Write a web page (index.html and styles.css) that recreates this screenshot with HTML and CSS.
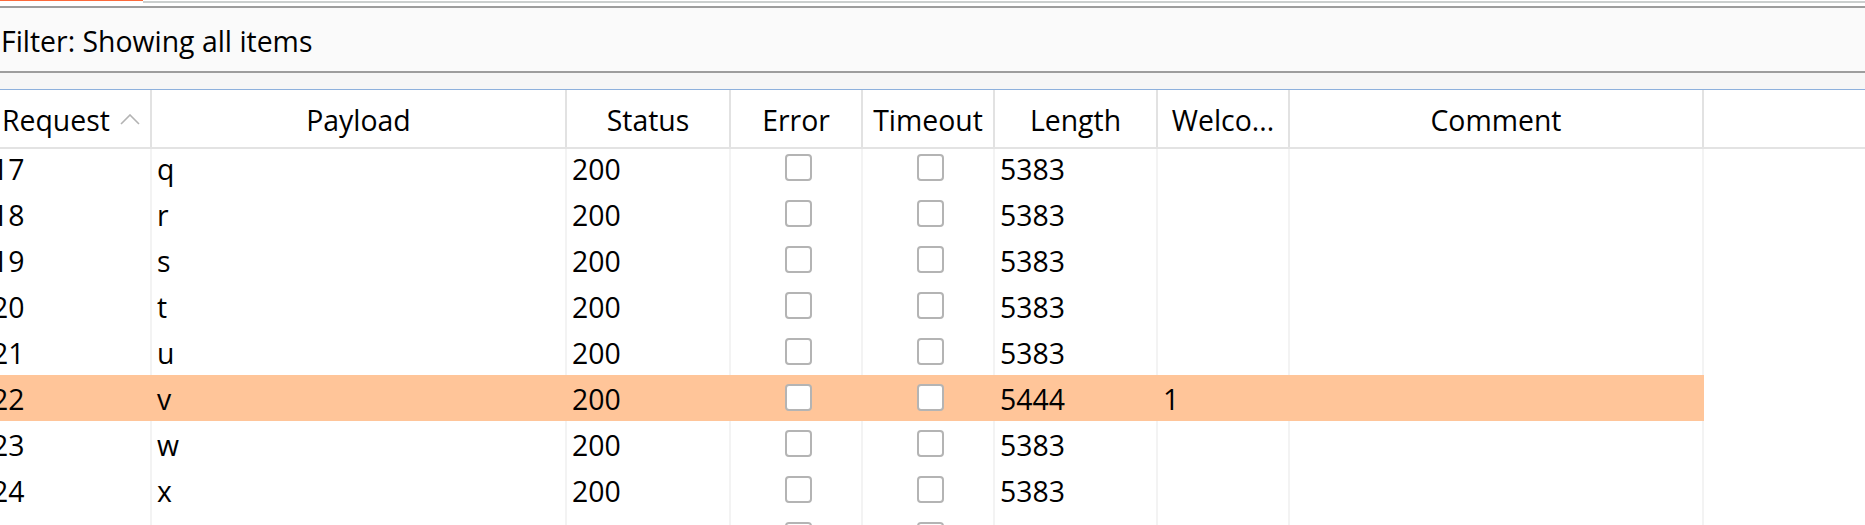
FILE: index.html
```html
<!DOCTYPE html>
<html lang="en">
<head>
<meta charset="utf-8">
<title>Intruder results</title>
<link rel="stylesheet" href="styles.css">
</head>
<body>
<div class="tabstrip">
  <div class="tab-active"></div>
  <div class="tab-rest"></div>
</div>
<div class="filter">Filter: Showing all items</div>
<div class="gap"></div>
<div class="table-view">
  <div class="table-inner">
    <div class="thead">
      <div class="th th-sort"><span>Request</span><svg class="sort" width="20" height="11" viewBox="0 0 20 11"><polyline points="1,10 10,1 19,10" fill="none" stroke="#b3b3b3" stroke-width="1.6"/></svg></div>
      <div class="th">Payload</div>
      <div class="th">Status</div>
      <div class="th">Error</div>
      <div class="th">Timeout</div>
      <div class="th">Length</div>
      <div class="th">Welco...</div>
      <div class="th">Comment</div>
      <div class="th filler"></div>
    </div>
    <div class="tbody">
      <div class="rows">
        <div class="row"><div class="td num">17</div><div class="td">q</div><div class="td">200</div><div class="td cb"><span class="box"></span></div><div class="td cb"><span class="box"></span></div><div class="td">5383</div><div class="td"></div><div class="td"></div><div class="td filler"></div></div>
        <div class="row"><div class="td num">18</div><div class="td">r</div><div class="td">200</div><div class="td cb"><span class="box"></span></div><div class="td cb"><span class="box"></span></div><div class="td">5383</div><div class="td"></div><div class="td"></div><div class="td filler"></div></div>
        <div class="row"><div class="td num">19</div><div class="td">s</div><div class="td">200</div><div class="td cb"><span class="box"></span></div><div class="td cb"><span class="box"></span></div><div class="td">5383</div><div class="td"></div><div class="td"></div><div class="td filler"></div></div>
        <div class="row"><div class="td num">20</div><div class="td">t</div><div class="td">200</div><div class="td cb"><span class="box"></span></div><div class="td cb"><span class="box"></span></div><div class="td">5383</div><div class="td"></div><div class="td"></div><div class="td filler"></div></div>
        <div class="row"><div class="td num">21</div><div class="td">u</div><div class="td">200</div><div class="td cb"><span class="box"></span></div><div class="td cb"><span class="box"></span></div><div class="td">5383</div><div class="td"></div><div class="td"></div><div class="td filler"></div></div>
        <div class="row hl"><div class="td num">22</div><div class="td">v</div><div class="td">200</div><div class="td cb"><span class="box"></span></div><div class="td cb"><span class="box"></span></div><div class="td">5444</div><div class="td">1</div><div class="td"></div><div class="td filler"></div></div>
        <div class="row"><div class="td num">23</div><div class="td">w</div><div class="td">200</div><div class="td cb"><span class="box"></span></div><div class="td cb"><span class="box"></span></div><div class="td">5383</div><div class="td"></div><div class="td"></div><div class="td filler"></div></div>
        <div class="row"><div class="td num">24</div><div class="td">x</div><div class="td">200</div><div class="td cb"><span class="box"></span></div><div class="td cb"><span class="box"></span></div><div class="td">5383</div><div class="td"></div><div class="td"></div><div class="td filler"></div></div>
        <div class="row"><div class="td num">25</div><div class="td">y</div><div class="td">200</div><div class="td cb"><span class="box"></span></div><div class="td cb"><span class="box"></span></div><div class="td">5383</div><div class="td"></div><div class="td"></div><div class="td filler"></div></div>
      </div>
    </div>
  </div>
</div>
</body>
</html>
```
FILE: styles.css
```css
html {
  overflow: hidden;
}
body {
  margin: 0;
  background: #ffffff;
  font-family: "Open Sans", "Noto Sans", sans-serif;
  font-size: 28.4px;
  color: #000000;
  height: 525px;
  overflow: hidden;
}
.tabstrip {
  display: flex;
  height: 6px;
  background: #ffffff;
}
.tab-active {
  width: 143px;
  height: 1px;
  background: #fb6a3b;
}
.tab-rest {
  flex: 1;
  margin-top: 1px;
  height: 2px;
  background: #cbcfce;
}
.filter {
  border-top: 2px solid #9d9d9d;
  border-bottom: 2px solid #9d9d9d;
  background: #fafafa;
  padding: 14px 0 0 1px;
  box-sizing: border-box;
  height: 67px;
  line-height: normal;
  white-space: nowrap;
}
.gap {
  height: 16px;
  background: #f6f6f6;
  border-bottom: 1px solid #8db0dc;
}
.table-view {
  overflow: hidden;
}
.table-inner {
  margin-left: -18px;
}
.thead,
.row {
  display: grid;
  grid-template-columns: 170px 415px 164px 132px 132px 163px 132px 414px 1fr;
}
.thead {
  border-bottom: 2px solid #e3e3e3;
  background: #ffffff;
}
.th {
  height: 57px;
  box-sizing: border-box;
  padding-top: 3px;
  line-height: 54px;
  text-align: center;
  border-right: 2px solid #e2e2e2;
  white-space: nowrap;
  overflow: hidden;
}
.th-sort {
  display: flex;
  align-items: flex-start;
  text-align: left;
  padding-left: 20px;
}
.sort {
  margin-left: 10px;
  margin-top: 21px;
}
.th.filler,
.td.filler {
  border-right: none;
}
.tbody {
  overflow: hidden;
  height: 376px;
}
.rows {
  margin-top: -4px;
}
.td {
  height: 46px;
  box-sizing: border-box;
  padding: 3px 0 0 5px;
  line-height: 43px;
  border-right: 2px solid #f3f3f3;
  white-space: nowrap;
  overflow: hidden;
}
.td.num {
  padding-left: 10px;
}
.td.cb {
  display: flex;
  justify-content: center;
  align-items: center;
  padding: 0 0 2px 4px;
}
.box {
  width: 27px;
  height: 27px;
  box-sizing: border-box;
  border: 2px solid #b4b4b4;
  border-radius: 4px;
  background: #ffffff;
}
.row.hl .td {
  background: #ffc599;
  border-right-color: #ffc599;
}
.row.hl .td.filler {
  background: #ffffff;
}
```
